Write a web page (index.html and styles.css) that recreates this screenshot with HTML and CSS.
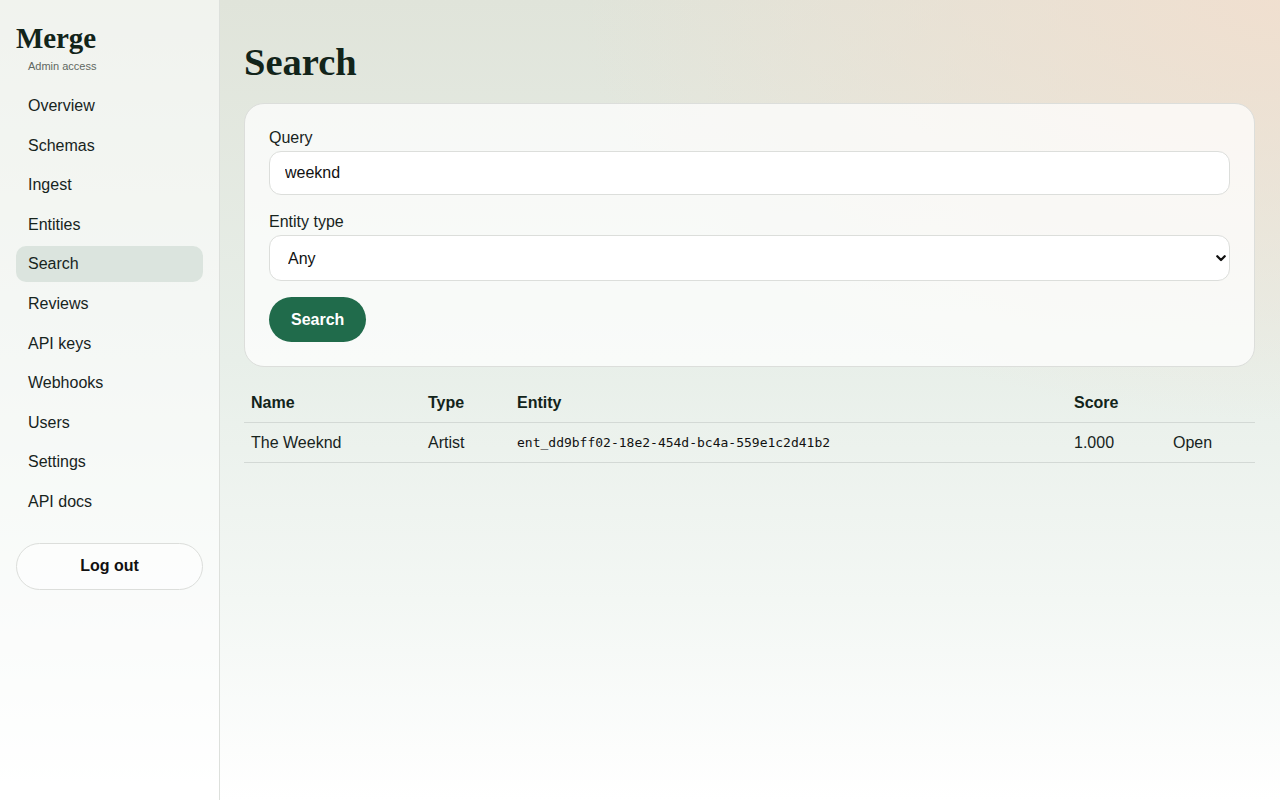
FILE: index.html
```html
<!DOCTYPE html>
<html lang="en">
<head>
<meta charset="utf-8">
<title>Search · Merge</title>
<link rel="stylesheet" href="styles.css">
</head>
<body>
<div class="app">
  <aside class="sidebar">
    <div class="brand">Merge</div>
    <div class="brand-sub">Admin access</div>
    <nav class="nav">
      <a class="nav-item" href="#">Overview</a>
      <a class="nav-item" href="#">Schemas</a>
      <a class="nav-item" href="#">Ingest</a>
      <a class="nav-item" href="#">Entities</a>
      <a class="nav-item active" href="#">Search</a>
      <a class="nav-item" href="#">Reviews</a>
      <a class="nav-item" href="#">API keys</a>
      <a class="nav-item" href="#">Webhooks</a>
      <a class="nav-item" href="#">Users</a>
      <a class="nav-item" href="#">Settings</a>
      <a class="nav-item" href="#">API docs</a>
    </nav>
    <button class="logout" type="button">Log out</button>
  </aside>
  <main class="main">
    <h1 class="page-title">Search</h1>
    <form class="card">
      <label class="field-label" for="q">Query</label>
      <input class="input" id="q" type="text" value="weeknd">
      <label class="field-label field-gap" for="t">Entity type</label>
      <div class="select-wrap">
        <select class="input select" id="t">
          <option>Any</option>
          <option>Artist</option>
          <option>Album</option>
          <option>Track</option>
        </select>
        <svg class="chevron" width="10" height="7" viewBox="0 0 10 7" aria-hidden="true"><path d="M1.3 1.3 L5 5 L8.7 1.3" fill="none" stroke="#111" stroke-width="2.3" stroke-linecap="round" stroke-linejoin="round"/></svg>
      </div>
      <div class="actions">
        <button class="btn-primary" type="button">Search</button>
      </div>
    </form>
    <table class="results">
      <colgroup>
        <col class="c-name"><col class="c-type"><col class="c-entity"><col class="c-score"><col class="c-open">
      </colgroup>
      <thead>
        <tr><th>Name</th><th>Type</th><th>Entity</th><th>Score</th><th></th></tr>
      </thead>
      <tbody>
        <tr>
          <td>The Weeknd</td>
          <td>Artist</td>
          <td><code class="mono">ent_dd9bff02-18e2-454d-bc4a-559e1c2d41b2</code></td>
          <td>1.000</td>
          <td><a class="open-link" href="#">Open</a></td>
        </tr>
      </tbody>
    </table>
  </main>
</div>
</body>
</html>
```

FILE: styles.css
```css
* { box-sizing: border-box; }
html, body { margin: 0; height: 100%; }
body {
  font-family: "Liberation Sans", Arial, sans-serif;
  font-size: 16px;
  color: #17241d;
  background:
    radial-gradient(ellipse 700px 420px at 100% 0%, rgba(241, 223, 207, 0.95), rgba(241, 223, 207, 0) 100%),
    linear-gradient(180deg, #e0e4da 0%, #e8efe9 45%, #f3f7f4 75%, #ffffff 100%);
  background-attachment: fixed;
  min-height: 800px;
}
.app { display: flex; min-height: 800px; }

.sidebar {
  width: 220px;
  flex: 0 0 220px;
  padding: 20px 16px 24px;
  background: rgba(255, 255, 255, 0.55);
  border-right: 1px solid #dde0dc;
  display: flex;
  flex-direction: column;
}
.brand {
  font-family: "Liberation Serif", "Times New Roman", serif;
  font-weight: 700;
  font-size: 29px;
  line-height: 36px;
  color: #12241a;
  letter-spacing: -0.1px;
}
.brand-sub {
  font-size: 11px;
  line-height: 14px;
  color: #5f6862;
  padding-left: 12px;
  margin-top: 3px;
}
.nav {
  display: flex;
  flex-direction: column;
  gap: 3.6px;
  margin-top: 15px;
}
.nav-item {
  display: block;
  padding: 8px 12px;
  line-height: 20px;
  border-radius: 10px;
  color: #17241d;
  text-decoration: none;
}
.nav-item.active { background: #dbe4de; }
.logout {
  margin-top: 23px;
  height: 47px;
  border: 1px solid #dcdedb;
  border-radius: 999px;
  background: rgba(255, 255, 255, 0.5);
  font-family: "Liberation Sans", Arial, sans-serif;
  font-weight: 700;
  font-size: 16px;
  color: #111;
}

.main {
  flex: 1;
  padding: 40px 25px 24px 24px;
}
.page-title {
  margin: 0 0 19px;
  font-family: "Liberation Serif", "Times New Roman", serif;
  font-weight: 700;
  font-size: 38.5px;
  line-height: 44px;
  color: #12241a;
}
.card {
  display: flex;
  flex-direction: column;
  padding: 24px;
  border: 1px solid #dcdedb;
  border-radius: 20px;
  background: rgba(255, 255, 255, 0.72);
}
.field-label {
  font-size: 16px;
  line-height: 19px;
  margin-bottom: 4px;
  color: #17241d;
}
.field-gap { margin-top: 17px; }
.input {
  width: 100%;
  height: 44px;
  padding: 0 15px;
  border: 1px solid #dcdedb;
  border-radius: 12px;
  background: #fff;
  font-family: "Liberation Sans", Arial, sans-serif;
  font-size: 16px;
  color: #111;
  outline: none;
}
.select-wrap { position: relative; }
.select {
  height: 46px;
  -webkit-appearance: none;
  appearance: none;
  padding-left: 18px;
}
.chevron {
  position: absolute;
  right: 4px;
  top: 20px;
  pointer-events: none;
}
.actions { margin-top: 16px; }
.btn-primary {
  height: 45px;
  padding: 0 22px;
  border: 0;
  border-radius: 999px;
  background: #206b4b;
  color: #fff;
  font-family: "Liberation Sans", Arial, sans-serif;
  font-weight: 700;
  font-size: 16px;
}

.results {
  width: 100%;
  margin-top: 16px;
  border-collapse: collapse;
  table-layout: fixed;
}
.c-name { width: 177px; }
.c-type { width: 89px; }
.c-entity { width: 557px; }
.c-score { width: 99px; }
.results th, .results td {
  text-align: left;
  padding: 10px 7px;
  line-height: 19px;
  border-bottom: 1px solid #d3d9d5;
  font-size: 16px;
}
.results th { font-weight: 700; color: #12241a; }
.results td { color: #17241d; padding-top: 9px; padding-bottom: 10px; }
.mono {
  font-family: "DejaVu Sans Mono", "Liberation Mono", monospace;
  font-size: 13px;
  color: #111;
}
.open-link { color: #17241d; text-decoration: none; }
```
